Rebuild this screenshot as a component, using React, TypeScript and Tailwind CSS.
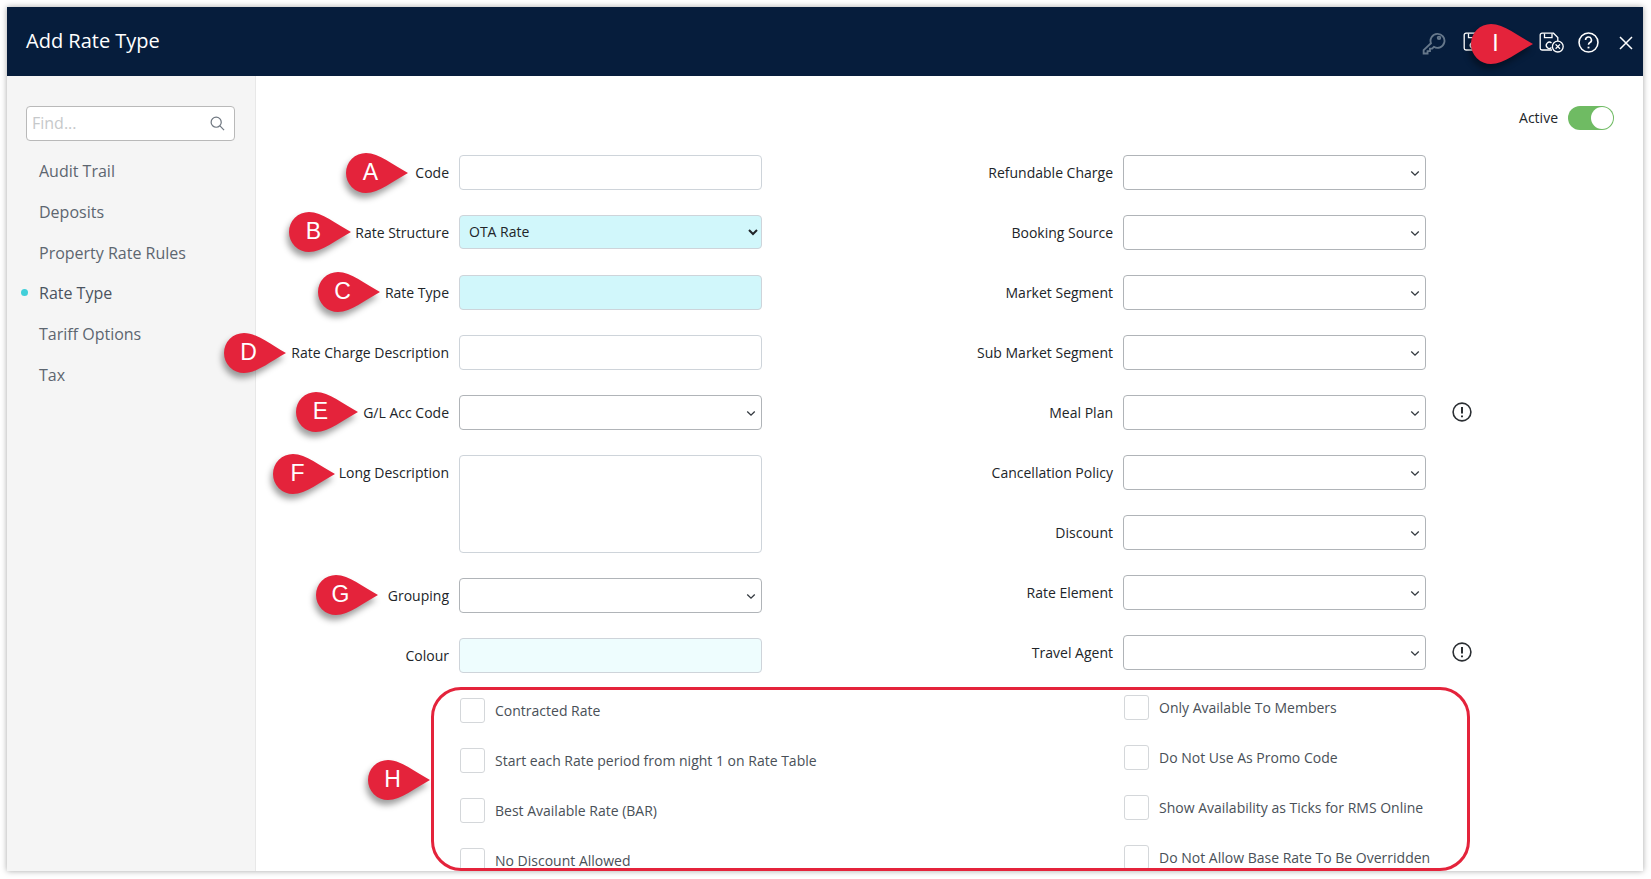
import React from "react";

const NAVY = "#061d3c";

function Pin({ letter, className }: { letter: string; className: string }) {
  return (
    <div className={`absolute z-20 h-[40px] w-[62px] ${className}`}>
      <svg viewBox="0 0 62 40" className="absolute inset-0 h-[40px] w-[62px] overflow-visible [filter:drop-shadow(-2px_5px_3px_rgba(0,0,0,0.38))]">
        <path d="M20 0C33 0 47 12 62 20C47 28 33 40 20 40A20 20 0 0 1 20 0Z" fill="#e4233b" />
      </svg>
      <span className="absolute left-0 top-0 flex h-[39px] w-[49px] items-center justify-center font-['Liberation_Sans',sans-serif] text-[23px] text-white">{letter}</span>
    </div>
  );
}

function Chevron() {
  return (
    <svg viewBox="0 0 12 8" className="pointer-events-none absolute right-[5px] top-[14px] h-[7px] w-[10px]" fill="none" stroke="#343a40" strokeWidth="1.6">
      <path d="M1.5 1.5L6 6l4.5-4.5" />
    </svg>
  );
}

function Label({ children }: { children: React.ReactNode }) {
  return <label className="w-[190px] shrink-0 pr-[10px] text-right text-[14px] leading-[35px] text-[#212529]">{children}</label>;
}

function TextRow({ label, bg = "bg-white", gap = "mb-[25px]" }: { label: string; bg?: string; gap?: string }) {
  return (
    <div className={`flex ${gap}`}>
      <Label>{label}</Label>
      <input className={`h-[35px] w-[303px] rounded-[4px] border border-[#ced4da] ${bg}`} />
    </div>
  );
}

function SelectRow({ label, width = "w-[303px]", gap = "mb-[25px]", warn = false }: { label: string; width?: string; gap?: string; warn?: boolean }) {
  return (
    <div className={`flex items-start ${gap}`}>
      <Label>{label}</Label>
      <div className={`relative h-[35px] ${width} rounded-[4px] border border-[#b0b4b8] bg-white`}>
        <Chevron />
      </div>
      {warn && (
        <svg viewBox="0 0 20 20" className="ml-[26px] mt-[7px] h-[20px] w-[20px]" fill="none" stroke="#2b2f33" strokeWidth="1.6">
          <circle cx="10" cy="10" r="8.9" />
          <path d="M10 5v6.4M10 13.6v1.6" strokeWidth="2" />
        </svg>
      )}
    </div>
  );
}

function Check({ label, gap = "mb-[25px]" }: { label: string; gap?: string }) {
  return (
    <div className={`flex h-[25px] items-center ${gap}`}>
      <span className="h-[25px] w-[25px] shrink-0 rounded-[3px] border border-[#d4d7da] bg-white" />
      <span className="ml-[10px] whitespace-nowrap text-[14px] text-[#495057]">{label}</span>
    </div>
  );
}

function SaveIcon({ variant }: { variant: "copy" | "close" }) {
  return (
    <svg viewBox="0 0 25 21" className="h-[21px] w-[25px]" fill="none" stroke="#fff" strokeWidth="1.3">
      <path d="M13 18H3a1.8 1.8 0 0 1-1.8-1.8V3A1.8 1.8 0 0 1 3 1.2h11.5L18.8 5.5V9" />
      <path d="M5.5 1.5v4.2h7.5V1.5" />
      <path d="M12.5 11a3.1 3.1 0 1 0 0 4.6" />
      <circle cx="18.8" cy="14.6" r="5.4" />
      {variant === "close" && <path d="M16.6 12.4l4.4 4.4M21 12.4l-4.4 4.4" />}
    </svg>
  );
}

const navItems = ["Audit Trail", "Deposits", "Property Rate Rules", "Rate Type", "Tariff Options", "Tax"];

export default function App() {
  return (
    <div className="h-[879px] w-[1651px] overflow-hidden bg-white pl-[7px] pt-[7px] font-['Open_Sans',sans-serif]">
      <div className="relative flex h-[864px] w-[1636px] flex-col overflow-hidden bg-white shadow-[0_0_6px_rgba(0,0,0,0.35)]">
        <header className="flex h-[69px] shrink-0 items-center pl-[19px] pr-[10px]" style={{ backgroundColor: NAVY }}>
          <h1 className="mb-[2px] text-[20px] font-normal text-white">Add Rate Type</h1>
          <div className="ml-auto mt-[2px] flex items-center">
            <svg viewBox="0 0 22 22" className="h-[24px] w-[24px]" fill="none" stroke="#66788b" strokeWidth="1.7">
              <path d="M8.2 11.2L1.5 17.6v3h3.6v-2.2h2.2v-2.2h2l1.6-1.7a6.4 6.4 0 1 0-2.7-3.3Z" />
              <circle cx="15.6" cy="6.3" r="1.2" />
            </svg>
            <div className="ml-[17px] w-[76px]"><SaveIcon variant="copy" /></div>
            <SaveIcon variant="close" />
            <svg viewBox="0 0 20 20" className="ml-[14px] h-[21px] w-[21px]" fill="none" stroke="#fff" strokeWidth="1.5">
              <circle cx="10" cy="10" r="9" />
              <path d="M7.2 7.6a2.8 2.8 0 1 1 4.2 2.4c-.9.5-1.4 1-1.4 2.1" />
              <path d="M10 14v1.6" strokeWidth="1.8" />
            </svg>
            <svg viewBox="0 0 14 14" className="ml-[20px] h-[14px] w-[14px]" fill="none" stroke="#fff" strokeWidth="1.5">
              <path d="M1 1l12 12M13 1L1 13" />
            </svg>
          </div>
        </header>

        <div className="flex min-h-0 flex-1">
          <aside className="w-[249px] shrink-0 border-r border-[#e8e8e8] bg-[#f5f5f5] pl-[19px] pr-[13px] pt-[30px]">
            <div className="relative h-[35px] w-[209px] rounded-[4px] border border-[#b9b9b9] bg-white">
              <input placeholder="Find..." className="mb-[1px] h-[32px] w-full bg-transparent pl-[5px] text-[16px] placeholder:text-[#c6c8ca]" />
              <svg viewBox="0 0 16 16" className="absolute right-[9px] top-[9px] h-[15px] w-[15px]" fill="none" stroke="#6f7780" strokeWidth="1.3">
                <circle cx="6.6" cy="6.6" r="5.4" />
                <path d="M10.6 10.6L15 15" />
              </svg>
            </div>
            <nav className="mt-[10px]">
              {navItems.map((item) => {
                const on = item === "Rate Type";
                return (
                  <div key={item} className={`relative h-[40.8px] pl-[13px] text-[16px] leading-[41px] ${on ? "font-medium text-[#4a5360]" : "text-[#5d6670]"}`}>
                    {on && <span className="absolute left-[-5px] top-[16px] h-[7px] w-[7px] rounded-full bg-[#41cfd9]" />}
                    {item}
                  </div>
                );
              })}
            </nav>
          </aside>

          <main className="relative min-w-0 flex-1 pt-[79px]">
            <div className="absolute right-[29px] top-[30px] flex items-center">
              <span className="mb-[2px] mr-[10px] text-[14px] text-[#212529]">Active</span>
              <span className="relative h-[24px] w-[46px] rounded-full bg-[#6fbb63]">
                <span className="absolute right-[1px] top-[1px] h-[22px] w-[22px] rounded-full bg-white" />
              </span>
            </div>

            <div className="flex">
              <div className="ml-[13px] w-[664px] shrink-0">
                <TextRow label="Code" />
                <div className="mb-[25px] flex">
                  <Label>Rate Structure</Label>
                  <select defaultValue="OTA Rate" className="h-[34px] w-[303px] rounded-[4px] border border-[#ced4da] bg-[#d1f7fb] pb-[2px] pl-[5px] text-[14px] text-[#212529]">
                    <option>OTA Rate</option>
                  </select>
                </div>
                <TextRow label="Rate Type" bg="bg-[#d1f7fb]" />
                <TextRow label="Rate Charge Description" />
                <SelectRow label="G/L Acc Code" />
                <div className="mb-[25px] flex">
                  <Label>Long Description</Label>
                  <textarea className="h-[98px] w-[303px] resize-none rounded-[4px] border border-[#ced4da] bg-white" />
                </div>
                <SelectRow label="Grouping" />
                <TextRow label="Colour" bg="bg-[#eefdfe]" gap="" />
                <div className="ml-[191px] mt-[25px]">
                  <Check label="Contracted Rate" />
                  <Check label="Start each Rate period from night 1 on Rate Table" />
                  <Check label="Best Available Rate (BAR)" />
                  <Check label="No Discount Allowed" gap="" />
                </div>
              </div>
              <div className="w-[600px] shrink-0">
                <SelectRow label="Refundable Charge" />
                <SelectRow label="Booking Source" />
                <SelectRow label="Market Segment" />
                <SelectRow label="Sub Market Segment" />
                <SelectRow label="Meal Plan" warn />
                <SelectRow label="Cancellation Policy" />
                <SelectRow label="Discount" />
                <SelectRow label="Rate Element" />
                <SelectRow label="Travel Agent" warn gap="" />
                <div className="ml-[191px] mt-[25px]">
                  <Check label="Only Available To Members" />
                  <Check label="Do Not Use As Promo Code" />
                  <Check label="Show Availability as Ticks for RMS Online" />
                  <Check label="Do Not Allow Base Rate To Be Overridden" gap="" />
                </div>
              </div>
            </div>
          </main>
        </div>

        <div className="pointer-events-none absolute left-[424px] top-[680px] z-10 h-[184px] w-[1039px] rounded-[30px] border-[3px] border-[#e4233b]" />
        <Pin letter="A" className="left-[339px] top-[146px]" />
        <Pin letter="B" className="left-[282px] top-[205px]" />
        <Pin letter="C" className="left-[311px] top-[265px]" />
        <Pin letter="D" className="left-[217px] top-[326px]" />
        <Pin letter="E" className="left-[289px] top-[385px]" />
        <Pin letter="F" className="left-[266px] top-[447px]" />
        <Pin letter="G" className="left-[309px] top-[568px]" />
        <Pin letter="H" className="left-[361px] top-[753px]" />
        <Pin letter="I" className="left-[1464px] top-[17px]" />
      </div>
    </div>
  );
}
